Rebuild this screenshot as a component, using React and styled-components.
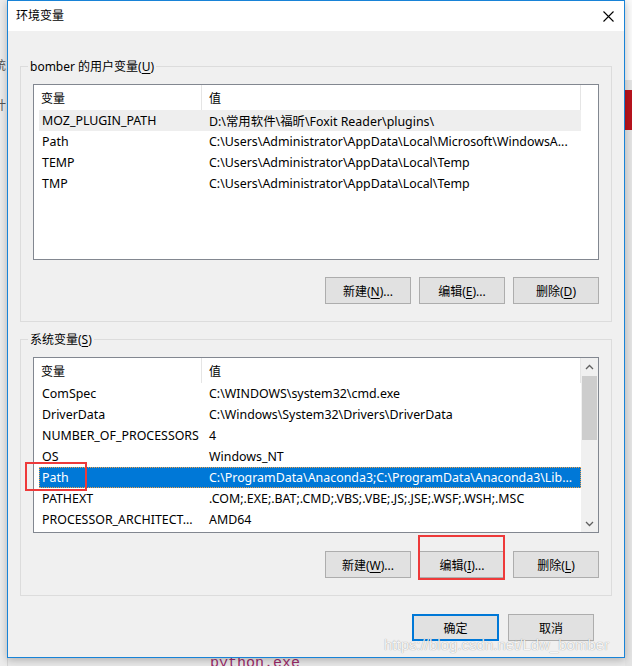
import React from 'react';
import styled, { createGlobalStyle } from 'styled-components';

const userVars = [
  { name: 'MOZ_PLUGIN_PATH', value: 'D:\\常用软件\\福昕\\Foxit Reader\\plugins\\', hover: true },
  { name: 'Path', value: 'C:\\Users\\Administrator\\AppData\\Local\\Microsoft\\WindowsA...' },
  { name: 'TEMP', value: 'C:\\Users\\Administrator\\AppData\\Local\\Temp' },
  { name: 'TMP', value: 'C:\\Users\\Administrator\\AppData\\Local\\Temp' },
];

const systemVars = [
  { name: 'ComSpec', value: 'C:\\WINDOWS\\system32\\cmd.exe' },
  { name: 'DriverData', value: 'C:\\Windows\\System32\\Drivers\\DriverData' },
  { name: 'NUMBER_OF_PROCESSORS', value: '4' },
  { name: 'OS', value: 'Windows_NT' },
  { name: 'Path', value: 'C:\\ProgramData\\Anaconda3;C:\\ProgramData\\Anaconda3\\Lib...', selected: true },
  { name: 'PATHEXT', value: '.COM;.EXE;.BAT;.CMD;.VBS;.VBE;.JS;.JSE;.WSF;.WSH;.MSC' },
  { name: 'PROCESSOR_ARCHITECT...', value: 'AMD64' },
];

const Chevron = ({ up }) => (
  <svg width='9' height='6' viewBox='0 0 9 6'>
    <path
      d={up ? 'M1 5 L4.5 1.5 L8 5' : 'M1 1 L4.5 4.5 L8 1'}
      fill='none'
      stroke='#606060'
      strokeWidth='1.3'
    />
  </svg>
);

const VarList = ({ rows, scroll }) => (
  <ListBox>
    <ListContent>
      <Header>
        <HeaderCell width={163} indent={2}>变量</HeaderCell>
        <HeaderCell width={379} indent={7}>值</HeaderCell>
      </Header>
      {rows.map((row) => (
        <Row key={row.name} hover={row.hover} selected={row.selected}>
          <Cell width={163} indent={3}>{row.name}</Cell>
          <Cell width={379} indent={7}>{row.value}</Cell>
        </Row>
      ))}
    </ListContent>
    {scroll && (
      <Scrollbar>
        <ScrollArrow><Chevron up /></ScrollArrow>
        <ScrollTrack>
          <Thumb />
        </ScrollTrack>
        <ScrollArrow><Chevron /></ScrollArrow>
      </Scrollbar>
    )}
  </ListBox>
);

const App = () => {
  return (
    <Desktop>
      <GlobalStyle />
      <LeftPeek>
        <PeekText top={56}>统</PeekText>
        <PeekText top={96}>计</PeekText>
      </LeftPeek>
      <RightPeek>
        <RedTab />
      </RightPeek>
      <BottomPeek>python.exe</BottomPeek>

      <Dialog>
        <TitleBar>
          <Title>环境变量</Title>
          <svg width='11' height='11' viewBox='0 0 11 11'>
            <path d='M0.5 0.5 L10.5 10.5 M10.5 0.5 L0.5 10.5' stroke='#000' strokeWidth='1.1' />
          </svg>
        </TitleBar>

        <Body>
          <Group>
            <Legend>bomber 的用户变量(<Key>U</Key>)</Legend>
            <VarList rows={userVars} />
            <ButtonRow>
              <Button>新建(<Key>N</Key>)...</Button>
              <Button>编辑(<Key>E</Key>)...</Button>
              <Button>删除(<Key>D</Key>)</Button>
            </ButtonRow>
          </Group>

          <Group>
            <Legend>系统变量(<Key>S</Key>)</Legend>
            <VarList rows={systemVars} scroll />
            <ButtonRow lower>
              <Button>新建(<Key>W</Key>)...</Button>
              <Button>编辑(<Key>I</Key>)...</Button>
              <Button>删除(<Key>L</Key>)</Button>
            </ButtonRow>
          </Group>

          <Footer>
            <Button primary>确定</Button>
            <Button>取消</Button>
          </Footer>
        </Body>
      </Dialog>

      <Mark left={25} top={462} width={62} height={29} />
      <Mark left={418} top={535} width={87} height={45} />
      <Watermark>https://blog.csdn.net/Ldw_bomber</Watermark>
    </Desktop>
  );
};

const GlobalStyle = createGlobalStyle`
  html, body {
    margin: 0;
    padding: 0;
  }
  body {
    font-family: "Noto Sans", "Noto Sans CJK SC", sans-serif;
    font-size: 12px;
    color: #000;
  }
`;

const Desktop = styled.div`
  position: relative;
  width: 632px;
  height: 666px;
  overflow: hidden;
  background: #e9e9e9;
`;

const LeftPeek = styled.div`
  position: absolute;
  left: 0;
  top: 0;
  width: 7px;
  height: 666px;
  overflow: hidden;
  background: #ececec;
  border-right: 1px solid #d6d6d6;
`;

const PeekText = styled.span`
  position: absolute;
  top: ${(p) => p.top}px;
  left: -6px;
  font-size: 12px;
  color: #555;
`;

const RightPeek = styled.div`
  position: absolute;
  right: 0;
  top: 0;
  width: 7px;
  height: 666px;
  background: linear-gradient(#fafafa 0 80px, #e4e4e4 80px);
`;

const RedTab = styled.div`
  margin-top: 90px;
  height: 40px;
  background: #b8141e;
`;

const BottomPeek = styled.div`
  position: absolute;
  left: 210px;
  top: 655px;
  font-family: "Liberation Mono", monospace;
  font-size: 15px;
  color: #9b2b6a;
`;

const Dialog = styled.div`
  position: absolute;
  left: 7px;
  top: 0;
  width: 618px;
  height: 658px;
  box-sizing: border-box;
  border: 1px solid #1883d7;
  background: #f0f0f0;
  display: flex;
  flex-direction: column;
  box-shadow: 0 2px 8px rgba(0, 0, 0, 0.25);
`;

const TitleBar = styled.div`
  height: 30px;
  flex-shrink: 0;
  background: #fff;
  display: flex;
  align-items: center;
  justify-content: space-between;
  padding: 0 10px 0 8px;
`;

const Title = styled.span`
  font-size: 12px;
  line-height: 16px;
`;

const Body = styled.div`
  flex: 1;
  display: flex;
  flex-direction: column;
  gap: 17px;
  padding: 35px 12px 0;
`;

const Group = styled.div`
  position: relative;
  border: 1px solid #dcdcdc;
  padding: 17px 12px 17px;
  display: flex;
  flex-direction: column;
  gap: 17px;
`;

const Legend = styled.div`
  position: absolute;
  top: -9px;
  left: 7px;
  padding: 0 2px;
  background: #f0f0f0;
  line-height: 17px;
  font-size: 12px;
`;

const Key = styled.span`
  text-decoration: underline;
  text-underline-offset: 2px;
`;

const ListBox = styled.div`
  height: 176px;
  box-sizing: border-box;
  border: 1px solid #828790;
  background: #fff;
  display: flex;
  padding-left: 5px;
`;

const ListContent = styled.div`
  width: 542px;
  display: flex;
  flex-direction: column;
`;

const Header = styled.div`
  height: 25px;
  display: flex;
`;

const HeaderCell = styled.div`
  width: ${(p) => p.width}px;
  box-sizing: border-box;
  padding-left: ${(p) => p.indent}px;
  border-right: 1px solid #e5e5e5;
  display: flex;
  align-items: center;
`;

const Row = styled.div`
  height: 21px;
  display: flex;
  align-items: center;
  box-sizing: border-box;
  font-size: 12.4px;
  background: ${(p) => (p.selected ? '#0078d7' : p.hover ? '#eeeeee' : 'transparent')};
  color: ${(p) => (p.selected ? '#fff' : '#000')};
  outline: ${(p) => (p.selected ? '1px dotted #f0a048' : 'none')};
  outline-offset: -1px;
`;

const Cell = styled.div`
  width: ${(p) => p.width}px;
  box-sizing: border-box;
  padding-left: ${(p) => p.indent}px;
  white-space: nowrap;
  overflow: hidden;
`;

const Scrollbar = styled.div`
  width: 17px;
  background: #f0f0f0;
  display: flex;
  flex-direction: column;
`;

const ScrollArrow = styled.div`
  height: 17px;
  display: flex;
  align-items: center;
  justify-content: center;
`;

const ScrollTrack = styled.div`
  flex: 1;
  padding: 1px 1px 0;
`;

const Thumb = styled.div`
  height: 64px;
  background: #cdcdcd;
`;

const ButtonRow = styled.div`
  display: flex;
  justify-content: flex-end;
  gap: 8px;
  margin-top: ${(p) => (p.lower ? 1 : 0)}px;
`;

const Button = styled.button`
  width: ${(p) => (p.primary ? 87 : 86)}px;
  height: 27px;
  box-sizing: border-box;
  padding: 0;
  background: #e1e1e1;
  border: ${(p) => (p.primary ? '2px solid #0078d7' : '1px solid #adadad')};
  font-family: "Noto Sans", "Noto Sans CJK SC", sans-serif;
  font-size: 12px;
  color: #000;
`;

const Footer = styled.div`
  display: flex;
  justify-content: flex-end;
  gap: 9px;
  padding: 1px 18px 0 0;
`;

const Mark = styled.div`
  position: absolute;
  left: ${(p) => p.left}px;
  top: ${(p) => p.top}px;
  width: ${(p) => p.width}px;
  height: ${(p) => p.height}px;
  box-sizing: border-box;
  border: 2px solid #ee3a3a;
`;

const Watermark = styled.div`
  position: absolute;
  left: 384px;
  top: 636px;
  font-family: "Liberation Sans", sans-serif;
  font-size: 15px;
  color: rgba(255, 255, 255, 0.92);
  text-shadow: 0 0 1px rgba(0, 0, 0, 0.45);
  white-space: nowrap;
`;

export default App;
